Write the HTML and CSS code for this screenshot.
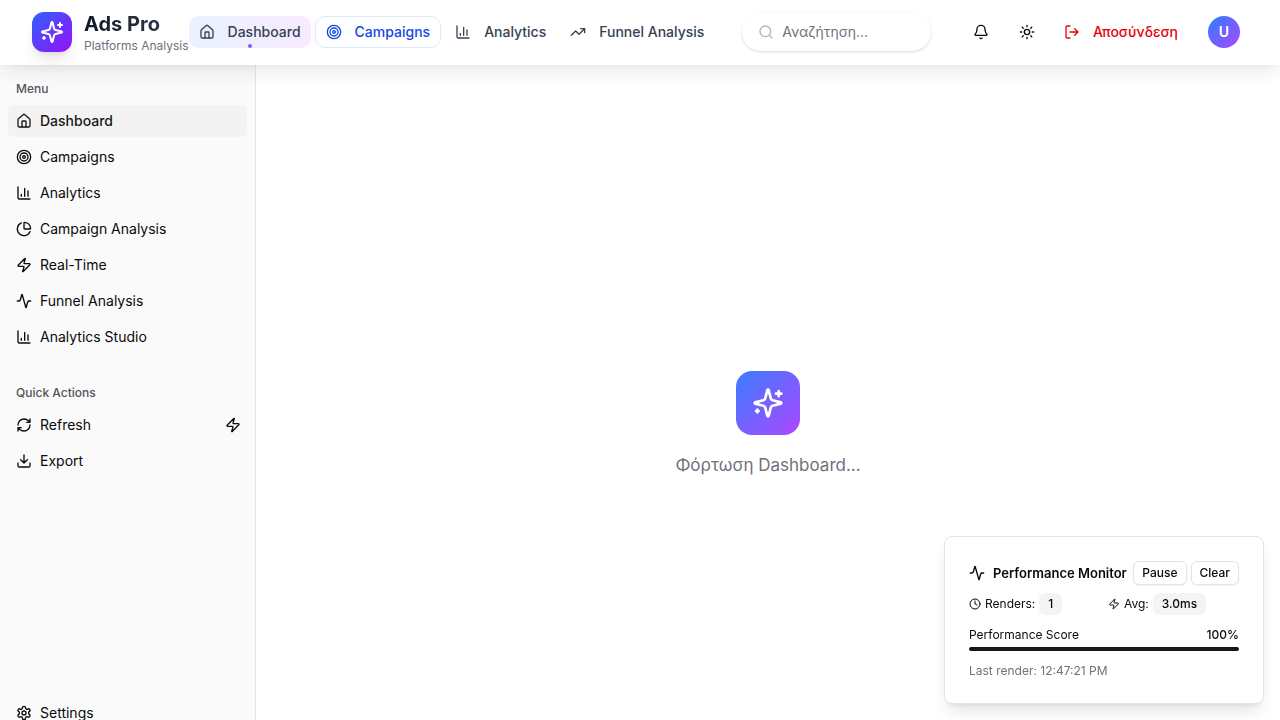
FILE: index.html
```html
<!DOCTYPE html>
<html lang="el">
<head>
<meta charset="utf-8">
<meta name="viewport" content="width=device-width, initial-scale=1">
<title>Ads Pro</title>
<link rel="stylesheet" href="styles.css">
</head>
<body>
<svg class="sprite" aria-hidden="true">
  <symbol id="sparkles" viewBox="0 0 24 24"><path d="M9.937 15.5A2 2 0 0 0 8.5 14.063l-6.135-1.582a.5.5 0 0 1 0-.962L8.5 9.936A2 2 0 0 0 9.937 8.5l1.582-6.135a.5.5 0 0 1 .963 0L14.063 8.5A2 2 0 0 0 15.5 9.937l6.135 1.581a.5.5 0 0 1 0 .964L15.5 14.063a2 2 0 0 0-1.437 1.437l-1.582 6.135a.5.5 0 0 1-.963 0z"/><path d="M20 3v4M22 5h-4M4 17v2M5 18H3"/></symbol>
  <symbol id="house" viewBox="0 0 24 24"><path d="M15 21v-8a1 1 0 0 0-1-1h-4a1 1 0 0 0-1 1v8"/><path d="M3 10a2 2 0 0 1 .709-1.528l7-5.999a2 2 0 0 1 2.582 0l7 5.999A2 2 0 0 1 21 10v9a2 2 0 0 1-2 2H5a2 2 0 0 1-2-2z"/></symbol>
  <symbol id="target" viewBox="0 0 24 24"><circle cx="12" cy="12" r="10"/><circle cx="12" cy="12" r="6"/><circle cx="12" cy="12" r="2"/></symbol>
  <symbol id="chart" viewBox="0 0 24 24"><path d="M3 3v16a2 2 0 0 0 2 2h16M18 17V9M13 17V5M8 17v-3"/></symbol>
  <symbol id="trend" viewBox="0 0 24 24"><path d="M22 7l-8.5 8.5-5-5L2 17M16 7h6v6"/></symbol>
  <symbol id="search" viewBox="0 0 24 24"><circle cx="11" cy="11" r="8"/><path d="M21 21l-4.3-4.3"/></symbol>
  <symbol id="bell" viewBox="0 0 24 24"><path d="M10.268 21a2 2 0 0 0 3.464 0M3.262 15.326A1 1 0 0 0 4 17h16a1 1 0 0 0 .74-1.673C19.41 13.956 18 12.499 18 8A6 6 0 0 0 6 8c0 4.499-1.411 5.956-2.738 7.326"/></symbol>
  <symbol id="sun" viewBox="0 0 24 24"><circle cx="12" cy="12" r="4"/><path d="M12 2v2M12 20v2M4.93 4.93l1.41 1.41M17.66 17.66l1.41 1.41M2 12h2M20 12h2M6.34 17.66l-1.41 1.41M19.07 4.93l-1.41 1.41"/></symbol>
  <symbol id="logout" viewBox="0 0 24 24"><path d="M9 21H5a2 2 0 0 1-2-2V5a2 2 0 0 1 2-2h4M16 17l5-5-5-5M21 12H9"/></symbol>
  <symbol id="pie" viewBox="0 0 24 24"><path d="M21 12c.552 0 1.005-.449.95-.998a10 10 0 0 0-8.953-8.951c-.55-.055-.998.398-.998.95v8a1 1 0 0 0 1 1z"/><path d="M21.21 15.89A10 10 0 1 1 8 2.83"/></symbol>
  <symbol id="zap" viewBox="0 0 24 24"><path d="M4 14a1 1 0 0 1-.78-1.63l9.9-10.2a.5.5 0 0 1 .86.46l-1.92 6.02A1 1 0 0 0 13 10h7a1 1 0 0 1 .78 1.63l-9.9 10.2a.5.5 0 0 1-.86-.46l1.92-6.02A1 1 0 0 0 11 14z"/></symbol>
  <symbol id="activity" viewBox="0 0 24 24"><path d="M22 12h-2.48a2 2 0 0 0-1.93 1.46l-2.35 8.36a.25.25 0 0 1-.48 0L9.24 2.18a.25.25 0 0 0-.48 0l-2.35 8.36A2 2 0 0 1 4.49 12H2"/></symbol>
  <symbol id="refresh" viewBox="0 0 24 24"><path d="M3 12a9 9 0 0 1 9-9 9.75 9.75 0 0 1 6.74 2.74L21 8M21 3v5h-5M21 12a9 9 0 0 1-9 9 9.75 9.75 0 0 1-6.74-2.74L3 16M8 16H3v5"/></symbol>
  <symbol id="download" viewBox="0 0 24 24"><path d="M12 15V3M21 15v4a2 2 0 0 1-2 2H5a2 2 0 0 1-2-2v-4M7 10l5 5 5-5"/></symbol>
  <symbol id="clock" viewBox="0 0 24 24"><circle cx="12" cy="12" r="10"/><path d="M12 6v6l4 2"/></symbol>
  <symbol id="gear" viewBox="0 0 24 24"><path d="M12.22 2h-.44a2 2 0 0 0-2 2v.18a2 2 0 0 1-1 1.73l-.43.25a2 2 0 0 1-2 0l-.15-.08a2 2 0 0 0-2.73.73l-.22.38a2 2 0 0 0 .73 2.73l.15.1a2 2 0 0 1 1 1.72v.51a2 2 0 0 1-1 1.74l-.15.09a2 2 0 0 0-.73 2.73l.22.38a2 2 0 0 0 2.73.73l.15-.08a2 2 0 0 1 2 0l.43.25a2 2 0 0 1 1 1.73V20a2 2 0 0 0 2 2h.44a2 2 0 0 0 2-2v-.18a2 2 0 0 1 1-1.73l.43-.25a2 2 0 0 1 2 0l.15.08a2 2 0 0 0 2.73-.73l.22-.39a2 2 0 0 0-.73-2.73l-.15-.08a2 2 0 0 1-1-1.74v-.5a2 2 0 0 1 1-1.74l.15-.09a2 2 0 0 0 .73-2.73l-.22-.38a2 2 0 0 0-2.73-.73l-.15.08a2 2 0 0 1-2 0l-.43-.25a2 2 0 0 1-1-1.73V4a2 2 0 0 0-2-2z"/><circle cx="12" cy="12" r="3"/></symbol>
</svg>

<header class="topbar">
  <div class="brand">
    <div class="brand-logo"><svg class="icon icon-lg"><use href="#sparkles"/></svg></div>
    <div>
      <div class="brand-name">Ads Pro</div>
      <div class="brand-sub">Platforms Analysis</div>
    </div>
  </div>
  <nav class="topnav">
    <a class="navlink navlink-current" href="#"><svg class="icon"><use href="#house"/></svg>Dashboard</a>
    <a class="navlink navlink-outlined" href="#"><svg class="icon"><use href="#target"/></svg>Campaigns</a>
    <a class="navlink" href="#"><svg class="icon"><use href="#chart"/></svg>Analytics</a>
    <a class="navlink" href="#"><svg class="icon"><use href="#trend"/></svg>Funnel Analysis</a>
  </nav>
  <label class="search">
    <svg class="icon"><use href="#search"/></svg>
    <input class="search-input" type="text" placeholder="Αναζήτηση..." aria-label="Αναζήτηση">
  </label>
  <div class="actions">
    <button class="icon-button" type="button" aria-label="Notifications"><svg class="icon"><use href="#bell"/></svg></button>
    <button class="icon-button" type="button" aria-label="Theme"><svg class="icon"><use href="#sun"/></svg></button>
    <button class="logout" type="button"><svg class="icon"><use href="#logout"/></svg>Αποσύνδεση</button>
    <button class="avatar" type="button">U</button>
  </div>
</header>

<div class="layout">
  <aside class="sidebar">
    <nav class="group">
      <div class="group-label">Menu</div>
      <a class="item item-active" href="#"><svg class="icon"><use href="#house"/></svg>Dashboard</a>
      <a class="item" href="#"><svg class="icon"><use href="#target"/></svg>Campaigns</a>
      <a class="item" href="#"><svg class="icon"><use href="#chart"/></svg>Analytics</a>
      <a class="item" href="#"><svg class="icon"><use href="#pie"/></svg>Campaign Analysis</a>
      <a class="item" href="#"><svg class="icon"><use href="#zap"/></svg>Real-Time</a>
      <a class="item" href="#"><svg class="icon"><use href="#activity"/></svg>Funnel Analysis</a>
      <a class="item" href="#"><svg class="icon"><use href="#chart"/></svg>Analytics Studio</a>
    </nav>
    <div class="group">
      <div class="group-label">Quick Actions</div>
      <button class="item item-trailing" type="button"><svg class="icon"><use href="#refresh"/></svg><span class="item-text">Refresh</span><svg class="icon"><use href="#zap"/></svg></button>
      <button class="item" type="button"><svg class="icon"><use href="#download"/></svg>Export</button>
    </div>
    <div class="group group-footer">
      <a class="item" href="#"><svg class="icon"><use href="#gear"/></svg>Settings</a>
    </div>
  </aside>
  <main class="main">
    <div class="loader-logo"><svg class="icon icon-xl"><use href="#sparkles"/></svg></div>
    <p class="loader-text">Φόρτωση Dashboard...</p>
  </main>
</div>

<section class="monitor">
  <div class="monitor-head">
    <h2 class="monitor-title"><svg class="icon"><use href="#activity"/></svg>Performance Monitor</h2>
    <div class="monitor-buttons">
      <button class="small-button" type="button">Pause</button>
      <button class="small-button" type="button">Clear</button>
    </div>
  </div>
  <div class="monitor-body">
    <div class="stats">
      <div class="stat"><svg class="icon icon-sm"><use href="#clock"/></svg>Renders:<span class="badge">1</span></div>
      <div class="stat"><svg class="icon icon-sm"><use href="#zap"/></svg>Avg:<span class="badge">3.0ms</span></div>
    </div>
    <div class="score">
      <div class="score-row"><span>Performance Score</span><span class="score-value">100%</span></div>
      <div class="bar"><div class="bar-fill" style="width: 100%"></div></div>
    </div>
    <div class="last-render">Last render: 12:47:21 PM</div>
  </div>
</section>
</body>
</html>
```
FILE: styles.css
```css
*, *::before, *::after { box-sizing: border-box; }
body {
  margin: 0;
  height: 100vh;
  overflow: hidden;
  background: #fff;
  color: #0a0a0a;
  font: 400 14px/20px Inter, "Noto Sans", sans-serif;
}
a { color: inherit; text-decoration: none; }
button, input { font: inherit; color: inherit; border: 0; background: none; padding: 0; margin: 0; }
button { cursor: pointer; }
.sprite { display: none; }
.icon {
  width: 16px;
  height: 16px;
  flex: none;
  fill: none;
  stroke: currentColor;
  stroke-width: 2;
  stroke-linecap: round;
  stroke-linejoin: round;
}
.icon-sm { width: 12px; height: 12px; }
.icon-lg { width: 24px; height: 24px; }
.icon-xl { width: 32px; height: 32px; }

.topbar {
  position: relative;
  z-index: 2;
  display: flex;
  align-items: center;
  height: 65px;
  padding: 0 40px 1px 32px;
  background: #fff;
  box-shadow: 0 10px 15px -3px rgba(15, 23, 42, 0.05), 0 4px 6px -4px rgba(15, 23, 42, 0.06), 0 12px 24px -4px rgba(15, 42, 32, 0.03);
}
.brand { display: flex; align-items: center; gap: 12px; }
.brand-logo {
  display: grid;
  place-items: center;
  width: 40px;
  height: 40px;
  border-radius: 12px;
  color: #fff;
  background: linear-gradient(135deg, #2b62ff, #9810fa);
  box-shadow: 0 10px 15px -3px rgba(0, 0, 0, 0.1), 0 4px 6px -4px rgba(0, 0, 0, 0.1);
}
.brand-name {
  font-size: 20px;
  line-height: 28px;
  font-weight: 700;
  color: transparent;
  background: linear-gradient(90deg, #101828, #364153);
  background-clip: text;
}
.brand-sub { font-size: 12px; line-height: 16px; color: #71717b; white-space: nowrap; }
.topnav { display: flex; gap: 4px; }
.navlink {
  position: relative;
  display: flex;
  align-items: center;
  gap: 13px;
  height: 32px;
  padding: 0 10px;
  border-radius: 10px;
  font-weight: 500;
  color: #364153;
  white-space: nowrap;
}
.navlink-current { background: linear-gradient(90deg, #e9f1ff, #f7eaff); }
.navlink-current::after {
  content: "";
  position: absolute;
  left: 50%;
  bottom: 0;
  width: 4px;
  height: 4px;
  margin-left: -2px;
  border-radius: 50%;
  background: linear-gradient(90deg, #4a70ff, #a24cff);
}
.navlink-outlined { border: 1px solid #dbeafe; color: #1447e6; }
.search {
  display: flex;
  align-items: center;
  gap: 8px;
  flex: 1;
  min-width: 0;
  height: 38px;
  margin: 0 31px 0 28px;
  padding: 0 16px;
  border-radius: 19px;
  color: #b4b4ba;
  box-shadow: 0 1px 3px rgba(0, 0, 0, 0.12), 0 1px 2px -1px rgba(0, 0, 0, 0.1);
}
.search-input { flex: 1; width: 100%; min-width: 0; outline: none; color: #0a0a0a; }
.search-input::placeholder { color: #71717b; opacity: 1; }
.actions { display: flex; align-items: center; flex: none; }
.icon-button { display: grid; place-items: center; width: 38px; height: 32px; margin-right: 8px; }
.logout { display: flex; align-items: center; gap: 13px; height: 32px; padding: 0 10px; font-weight: 500; color: #e7000b; }
.avatar {
  width: 32px;
  height: 32px;
  margin-left: 20px;
  border-radius: 50%;
  color: #fff;
  font-weight: 600;
  background: linear-gradient(135deg, #2b7fff, #ad46ff);
}

.layout { display: flex; }
.sidebar {
  display: flex;
  flex-direction: column;
  flex: none;
  width: 256px;
  height: calc(100vh - 48px);
  border-right: 1px solid #e4e4e7;
  background: #fafafa;
}
.group { display: flex; flex-direction: column; gap: 4px; padding: 8px; }
.group + .group { margin-top: 8px; }
.group + .group-footer { margin-top: auto; }
.group-label { height: 32px; margin-bottom: -4px; padding: 0 8px; font-size: 12px; line-height: 32px; font-weight: 500; color: #52525b; }
.item {
  display: flex;
  align-items: center;
  gap: 8px;
  height: 32px;
  padding: 0 8px;
  border-radius: 6px;
  text-align: left;
}
.item-trailing { padding-right: 6px; }
.item-text { flex: 1; }
.item-active { background: #f3f3f3; font-weight: 500; color: #18181b; }
.main {
  display: flex;
  flex-direction: column;
  align-items: center;
  justify-content: center;
  gap: 16px;
  flex: 1;
  height: 100vh;
}
.loader-logo {
  display: grid;
  place-items: center;
  width: 64px;
  height: 64px;
  border-radius: 16px;
  color: #fff;
  background: linear-gradient(135deg, #3b7cff, #ad46ff);
}
.loader-text { margin: 0; font-size: 17px; line-height: 28px; color: #71717b; }

.monitor {
  position: fixed;
  z-index: 3;
  right: 16px;
  bottom: 16px;
  width: 320px;
  padding: 24px;
  border: 1px solid #e4e4e7;
  border-radius: 8px;
  background: #fff;
  font-size: 12px;
  line-height: 16px;
  box-shadow: 0 10px 15px -3px rgba(0, 0, 0, 0.1), 0 4px 6px -4px rgba(0, 0, 0, 0.1);
}
.monitor-head { display: flex; align-items: center; justify-content: space-between; height: 24px; margin-bottom: 8px; }
.monitor-title { display: flex; align-items: center; gap: 8px; margin: 0; font-size: 13px; line-height: 20px; font-weight: 600; white-space: nowrap; }
.monitor-buttons { display: flex; gap: 4px; }
.small-button {
  height: 24px;
  padding: 0 8px;
  border: 1px solid #e4e4e7;
  border-radius: 6px;
  font-weight: 500;
  background: #fff;
  box-shadow: 0 1px 2px rgba(0, 0, 0, 0.05);
}
.monitor-body { display: flex; flex-direction: column; gap: 12px; }
.stats { display: grid; grid-template-columns: 1fr 1fr; gap: 8px; }
.stat { display: flex; align-items: center; gap: 4px; }
.badge { padding: 3px 9px; border-radius: 6px; font-weight: 500; background: #f4f4f5; }
.score { display: flex; flex-direction: column; gap: 4px; }
.score-row { display: flex; justify-content: space-between; }
.score-value { font-weight: 500; }
.bar { height: 4px; border-radius: 2px; overflow: hidden; background: #e4e4e7; }
.bar-fill { height: 4px; background: #18181b; }
.last-render { color: #71717b; }
```
